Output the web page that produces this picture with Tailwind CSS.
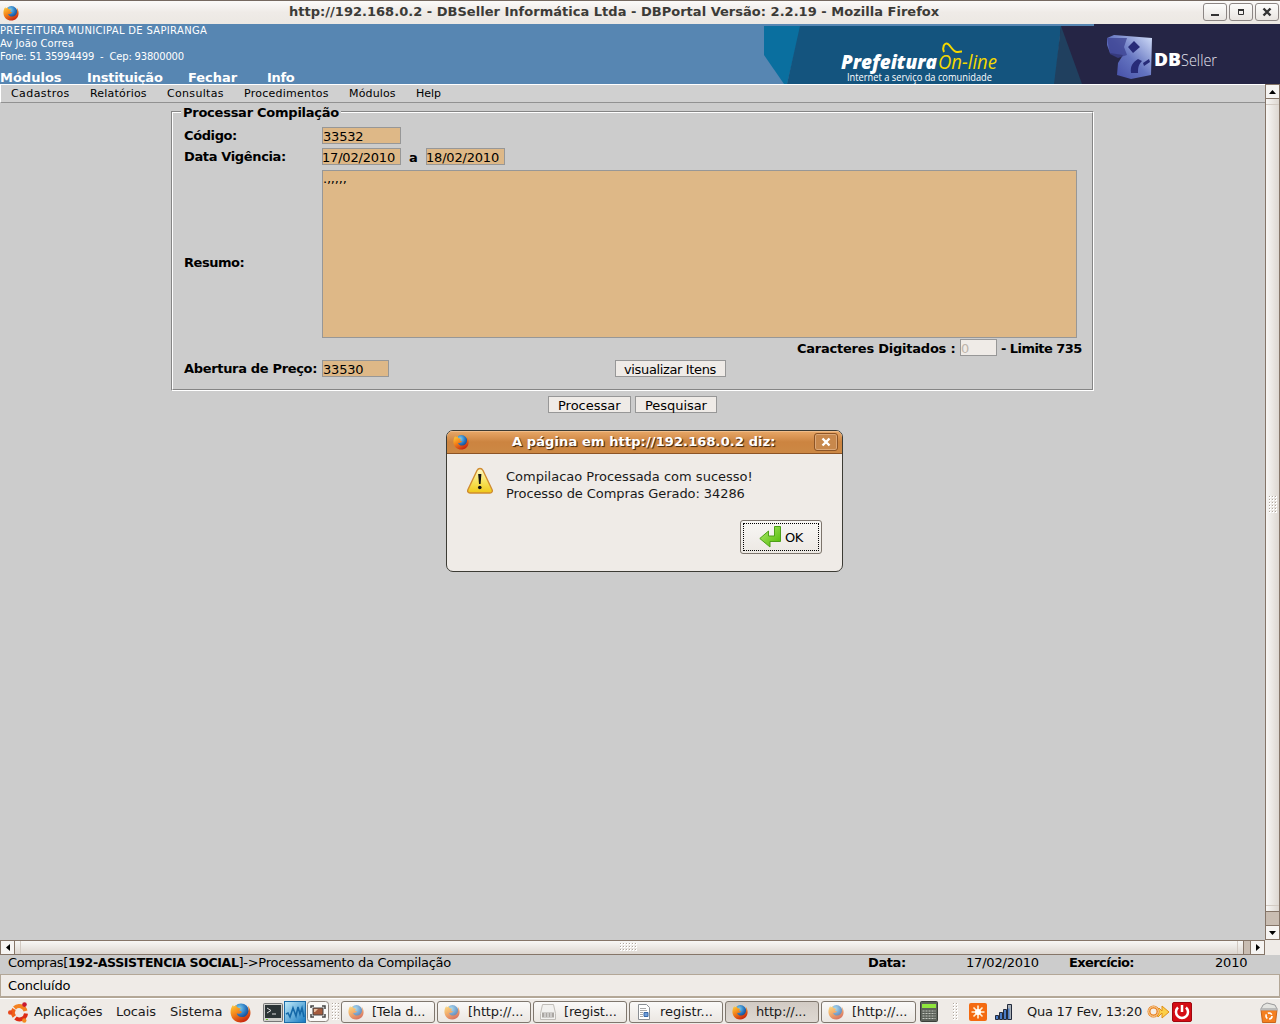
<!DOCTYPE html>
<html lang="pt-BR">
<head>
<meta charset="utf-8">
<title>DBPortal</title>
<script src="https://cdn.jsdelivr.net/npm/@tailwindcss/browser@4"></script>
</head>
<body class="w-[1280px] h-[1024px] overflow-hidden bg-[#ccc] text-black font-['DejaVu_Sans',sans-serif] text-[13px] leading-4 whitespace-nowrap">
<svg width="0" height="0" class="absolute">
  <defs>
    <radialGradient id="globe" cx=".4" cy=".3" r=".8"><stop offset="0" stop-color="#7fd0f0"/><stop offset=".5" stop-color="#2a78c0"/><stop offset="1" stop-color="#0b2a70"/></radialGradient>
    <linearGradient id="fox" x1="0" y1="0" x2=".6" y2="1"><stop offset="0" stop-color="#ffd23c"/><stop offset=".45" stop-color="#f58a1c"/><stop offset="1" stop-color="#c8280e"/></linearGradient>
    <linearGradient id="warn" x1="0" y1="0" x2="0" y2="1"><stop offset="0" stop-color="#fff9c8"/><stop offset=".55" stop-color="#f7e25a"/><stop offset="1" stop-color="#f0c818"/></linearGradient>
    <linearGradient id="green" x1="0" y1="0" x2="1" y2="1"><stop offset="0" stop-color="#b0ec70"/><stop offset="1" stop-color="#4fb800"/></linearGradient>
    <linearGradient id="cube" x1="0" y1="1" x2="1" y2="0"><stop offset="0" stop-color="#3c44a0"/><stop offset=".5" stop-color="#6474c0"/><stop offset="1" stop-color="#d4e0fa"/></linearGradient>
    <linearGradient id="sky" x1="0" y1="0" x2="1" y2="1"><stop offset="0" stop-color="#c4ecfa"/><stop offset="1" stop-color="#1478c0"/></linearGradient>
    <pattern id="grip" width="3" height="3" patternUnits="userSpaceOnUse"><path d="M0 0h2v2H0z" fill="#fff"/><path d="M0 0h1v1H0z" fill="#b0a79e"/></pattern>
    <symbol id="firefox" viewBox="0 0 20 20">
      <circle cx="10.5" cy="9" r="7.6" fill="url(#globe)"/>
      <path d="M3 2.5C1 5 .3 8 .6 11c.6 5 4.700 8.500 9.600 8.500 5.300 0 9.300-4.100 9.300-9.300 0-2.600-.8-5-2.500-6.700.7 1.800 1 3.400.6 5-.5 3.500-3 5.900-6.200 5.900-2.700 0-4.700-1.500-5-3.600 1 .6 2.300.6 3.300-.1.8-.6 1.400-.6 1.700-1.200-.7-.7-2-.8-2.600-1.300 0-.9 1.200-1.300 1.400-2.200-1.300 0-2.400-.2-3-.9C5.800 4.600 6 3.500 6.500 3 5.200 3 4.300 3.600 3.600 4.300 3.100 3.800 3 3.200 3 2.500z" fill="url(#fox)"/>
    </symbol>
  </defs>
</svg>
<div class="flex flex-col w-[1280px] h-[1024px]">

  <!-- Window title bar -->
  <div class="flex h-6 shrink-0 items-center border-t border-[#756960] bg-linear-to-b from-[#fbfaf9] via-[#efebe7] to-[#ece8e3]">
    <svg class="ml-[3px] size-4 shrink-0"><use href="#firefox"/></svg>
    <div class="ml-[270px] w-[914px] pb-px font-bold tracking-[0.02px] text-[#3c3b37]">http://192.168.0.2 - DBSeller Informática Ltda - DBPortal Versão: 2.2.19 - Mozilla Firefox</div>
    <div class="flex gap-[2px] pb-px">
      <div class="flex h-[18px] w-6 items-center justify-center rounded-[3px] border border-[#8c8684] bg-linear-to-b from-[#fdfdfc] to-[#e9e5e1]"><svg width="10" height="10"><path d="M1 8h8" stroke="#333" stroke-width="2"/></svg></div>
      <div class="flex h-[18px] w-6 items-center justify-center rounded-[3px] border border-[#8c8684] bg-linear-to-b from-[#fdfdfc] to-[#e9e5e1]"><svg width="10" height="10"><path d="M2.500 3v4.500h5v-5h-5" fill="none" stroke="#333"/><path d="M2 3h6" stroke="#333" stroke-width="2"/></svg></div>
      <div class="flex h-[18px] w-6 items-center justify-center rounded-[3px] border border-[#8c8684] bg-linear-to-b from-[#fdfdfc] to-[#e9e5e1]"><svg width="10" height="10"><path d="M1.500 1.500l7 7m0-7l-7 7" stroke="#333" stroke-width="2.400"/></svg></div>
    </div>
  </div>

  <!-- Municipality header -->
  <div class="flex h-[60px] shrink-0 bg-[#5786b2] text-white">
    <div class="w-[764px] text-[10px] leading-[13px]">
      <div class="tracking-[0.32px]">PREFEITURA MUNICIPAL DE SAPIRANGA</div>
      <div class="tracking-[0.07px]">Av João Correa</div>
      <div class="tracking-[-0.19px]">Fone: 51 35994499 &nbsp;- &nbsp;Cep: 93800000</div>
      <div class="mt-[8px] flex text-[13px] leading-[13px] font-bold">
        <div class="w-[87px]">Módulos</div><div class="w-[101px] tracking-[-0.2px]">Instituição</div><div class="w-[79px] tracking-[-0.05px]">Fechar</div><div class="tracking-[-0.3px]">Info</div>
      </div>
    </div>
    <svg width="516" height="60" class="shrink-0">
      <path d="M296 2h34V0h186v60H296z" fill="#252545"/>
      <path d="M0 2h37L23 60h-3L0 31z" fill="#0a6f9f"/>
      <path d="M36 2h261l-6 58H23z" fill="#14547e"/>
      <path d="M297 2l21 58h-28z" fill="#20405f"/>
      <g font-family="'Open Sans',sans-serif">
        <text x="77" y="45" font-size="20" font-weight="800" font-style="italic" fill="#fff" textLength="96" lengthAdjust="spacingAndGlyphs">Prefeitura</text>
        <text x="174" y="45" font-size="20.500" font-style="italic" fill="#f4d800" textLength="59" lengthAdjust="spacingAndGlyphs">On-line</text>
        <text x="83" y="56.500" font-size="10.500" fill="#fff" textLength="145" lengthAdjust="spacingAndGlyphs">Internet a serviço da comunidade</text>
        <text x="390" y="41.500" font-size="17" font-weight="800" fill="#fff" textLength="27" lengthAdjust="spacingAndGlyphs">DB</text>
        <text x="417" y="41.500" font-size="17" font-weight="300" fill="#e4e4ee" textLength="36" lengthAdjust="spacingAndGlyphs">Seller</text>
      </g>
      <path d="M180 28c-2-4 0-10 4-8 3 2 5 8 9 8 2 0 3-.5 5-.5" fill="none" stroke="#f4d800" stroke-width="2"/>
      <path d="M343 14l7-3 38 3-1 37-20 4-14-4 1-12 5-8-13-2-3-8z" fill="url(#cube)"/>
      <path d="M343 14l20 0-3 9 3 8-9 3-8-4z" fill="#3c4290" opacity=".75"/>
      <path d="M364 23l6-6 6 6-7 6zM367 49c-1-7 2-11 7-14l4 2c-4 4-4 8-4 12zM379 39l6-4 1 3-6 4z" fill="#272b78"/>
    </svg>
  </div>

  <!-- Page viewport and vertical scrollbar -->
  <div class="flex h-[856px] shrink-0">
    <div class="w-[1265px]">
      <div class="flex h-[19px] items-center border-t border-l border-white border-b border-b-[#919191] bg-[#d0d0d0] pl-[10px] text-[11px]">
        <div class="w-[79px] tracking-[0.42px]">Cadastros</div><div class="w-[77px] tracking-[0.2px]">Relatórios</div><div class="w-[77px] tracking-[0.32px]">Consultas</div><div class="w-[105px] tracking-[0.25px]">Procedimentos</div><div class="w-[67px] tracking-[0.15px]">Módulos</div><div>Help</div>
      </div>
      <div class="relative mt-2 ml-[171px] h-[280px] w-[923px] border border-t-[#858585] border-l-[#858585] border-r-white border-b-white">
        <div class="h-full border border-t-white border-l-white border-r-[#858585] border-b-[#858585] pl-[11px] pt-[14px]">
          <div class="absolute -top-[7px] left-[9px] w-[160px] bg-[#ccc] pl-[2px] font-bold tracking-[-0.25px]">Processar Compilação</div>
          <div class="flex h-[17px]">
            <div class="w-[138px] pt-px font-bold tracking-[-0.4px]">Código:</div>
            <div class="w-[79px] border border-[#979797] bg-[#deb887] pt-px tracking-[-0.2px]">33532</div>
          </div>
          <div class="mt-1 flex h-[17px]">
            <div class="w-[138px] pt-px font-bold tracking-[-0.36px]">Data Vigência:</div>
            <div class="w-[79px] border border-[#979797] bg-[#deb887] pt-px tracking-[-0.19px]"><span class="-ml-px">17/02/2010</span></div>
            <div class="w-[25px] pl-2 pt-[2px] font-bold">a</div>
            <div class="w-[79px] border border-[#979797] bg-[#deb887] pt-px tracking-[-0.19px]"><span class="-ml-px">18/02/2010</span></div>
          </div>
          <div class="mt-[5px] flex h-[168px]">
            <div class="flex w-[138px] items-center pt-[18px] font-bold tracking-[-0.45px]">Resumo:</div>
            <div class="w-[755px] border border-[#979797] bg-[#deb887] tracking-[-0.2px]">.,,,,,</div>
          </div>
          <div class="mt-px flex h-[17px] pl-[613px] font-bold">
            <div class="w-[163px] pt-[2px] tracking-[-0.23px]">Caracteres Digitados :</div>
            <div class="w-[37px] border border-[#979797] bg-[#efebe7] pt-px font-normal text-[#bdb5ac]">0</div>
            <div class="pt-[2px] pl-1 tracking-[-0.55px]">- Limite 735</div>
          </div>
          <div class="mt-1 flex h-[17px]">
            <div class="w-[138px] pt-px font-bold tracking-[-0.33px]">Abertura de Preço:</div>
            <div class="w-[67px] border border-[#979797] bg-[#deb887] pt-px tracking-[-0.2px]">33530</div>
            <div class="ml-[226px] w-[111px] border border-[#979797] bg-[#efebe7] pt-px pl-2 tracking-[-0.36px]">visualizar Itens</div>
          </div>
        </div>
      </div>
      <div class="mt-[5px] ml-[548px] flex h-[17px] gap-1">
        <div class="w-[83px] border border-[#979797] bg-[#efebe7] pt-px pl-[9px]">Processar</div>
        <div class="w-[82px] border border-[#979797] bg-[#efebe7] pt-px pl-[9px] tracking-[-0.05px]">Pesquisar</div>
      </div>
    </div>
    <div class="flex w-[15px] flex-col border-x border-[#857568] bg-[#c9bdb2]">
      <div class="flex h-[15px] items-center justify-center border-y border-[#857568] bg-[#f6f4f2]"><svg width="7" height="4"><path d="M3.500 0L7 4H0z"/></svg></div>
      <div class="flex h-[813px] flex-col justify-between border-b border-[#857568] bg-linear-to-r from-[#f8f7f5] to-[#ddd7d1] py-[5px]">
        <div class="h-px bg-[#d2cac2]"></div>
        <svg width="13" height="18"><path d="M2 0h9v18H2z" fill="url(#grip)"/></svg>
        <div class="h-px bg-[#d2cac2]"></div>
      </div>
      <div class="mt-auto flex h-[15px] items-center justify-center border-y border-[#857568] bg-[#f6f4f2]"><svg width="7" height="4"><path d="M0 0h7L3.500 4z"/></svg></div>
    </div>
  </div>

  <!-- Horizontal scrollbar -->
  <div class="flex h-[15px] shrink-0 bg-[#efebe7]">
    <div class="flex w-[1265px] border-y border-r border-[#857568] bg-[#c9bdb2]">
      <div class="flex w-[15px] items-center justify-center border-x border-[#857568] bg-[#f6f4f2]"><svg width="4" height="7"><path d="M4 0v7L0 3.500z"/></svg></div>
      <div class="flex w-[1229px] items-center justify-between border-r border-[#857568] bg-linear-to-b from-[#f8f7f5] to-[#ddd7d1] px-[5px]">
        <div class="h-full w-px bg-[#d2cac2]"></div>
        <svg width="18" height="9"><path d="M0 0h18v9H0z" fill="url(#grip)"/></svg>
        <div class="h-full w-px bg-[#d2cac2]"></div>
      </div>
      <div class="ml-auto flex w-[14px] items-center justify-center border-l border-[#857568] bg-[#f6f4f2]"><svg width="4" height="7"><path d="M0 0l4 3.500L0 7z"/></svg></div>
    </div>
  </div>

  <!-- Application status -->
  <div class="flex h-[19px] shrink-0 pl-2">
    <div class="w-[860px]"><span class="tracking-[-0.4px]">Compras[</span><b class="text-[12.5px] tracking-[-0.36px]">192-ASSISTENCIA SOCIAL</b><span class="tracking-[-0.27px]">]-&gt;Processamento da Compilação</span></div>
    <div class="w-[98px] font-bold tracking-[-0.4px]">Data:</div>
    <div class="w-[103px] tracking-[-0.2px]">17/02/2010</div>
    <div class="w-[146px] font-bold tracking-[-0.6px]">Exercício:</div>
    <div class="tracking-[-0.2px]">2010</div>
  </div>
  <div class="flex h-6 shrink-0 items-center border border-b-2 border-[#b3a797] bg-[#efebe7] pl-[7px] tracking-[-0.2px]">Concluído</div>

  <!-- Desktop panel -->
  <div class="flex h-[27px] shrink-0 items-center border-t border-white bg-[#efebe7] pl-2 text-[#1a1a1a]">
    <svg width="21" height="21" viewBox="0 0 21 21" class="shrink-0"><g fill="none" stroke-width="4"><path d="M6.500 6A6.500 6.500 0 0 1 17.500 9" stroke="#f48120"/><path d="M18 11.500A6.500 6.500 0 0 1 7.500 16" stroke="#dd2c14"/><path d="M6.300 14.500A6.500 6.500 0 0 1 6 7" stroke="#f06018"/></g><circle cx="2.200" cy="10.500" r="2.200" fill="#e8481c"/><circle cx="16.500" cy="2.600" r="2.300" fill="#c81830"/><circle cx="16.300" cy="18.500" r="2.200" fill="#f48a20"/></svg>
    <div class="ml-[5px] w-[82px] tracking-[-0.1px]">Aplicações</div>
    <div class="w-[54px] tracking-[-0.1px]">Locais</div>
    <div class="w-[60px]">Sistema</div>
    <svg class="size-[21px] shrink-0"><use href="#firefox"/></svg>
    <svg width="20" height="19" class="ml-3 shrink-0"><rect x=".5" y=".5" width="19" height="18" rx="1" fill="#d0d0cc" stroke="#777"/><path d="M2 2h16v13H2z" fill="#2c3436"/><path d="M4 5l4 2.500L4 10M9 11h4" fill="none" stroke="#ddd"/><path d="M3 16.500h2" stroke="#6c2"/></svg>
    <svg width="22" height="22" class="ml-px shrink-0"><rect x=".5" y=".5" width="21" height="21" fill="url(#sky)" stroke="#1c6ca8"/><path d="M2 13l2-1 2 4 3-9 3 8 2-9 2 7 2-6 2 9" fill="none" stroke="#1468a8" stroke-width="1.600"/></svg>
    <svg width="22" height="22" class="ml-px shrink-0"><rect x=".5" y=".5" width="21" height="20" rx="3" fill="#faf9f7" stroke="#8f8780"/><rect x="6" y="7" width="10" height="7" fill="#a45a3c" stroke="#444"/><path d="M7 8h4l-3 3H7z" fill="#e8c0a0"/><path d="M4 7V5h3M15 5h3v3M18 13v3h-3M7 16H4v-3" fill="none" stroke="#444" stroke-width="1.500"/></svg>
    <svg width="7" height="18" class="ml-[3px] shrink-0"><path d="M0 0h7v18H0z" fill="url(#grip)"/></svg>
    <div class="ml-[2px] flex gap-[2px]">
      <div class="flex h-[22px] w-[94px] items-center gap-2 rounded-[3px] border border-[#7f776e] bg-linear-to-b from-[#faf9f8] to-[#ebe7e2] pl-[6px] tracking-[-0.2px]"><svg class="size-4 opacity-60"><use href="#firefox"/></svg>[Tela d...</div>
      <div class="flex h-[22px] w-[94px] items-center gap-2 rounded-[3px] border border-[#7f776e] bg-linear-to-b from-[#faf9f8] to-[#ebe7e2] pl-[6px] tracking-[-0.2px]"><svg class="size-4 opacity-60"><use href="#firefox"/></svg>[http://...</div>
      <div class="flex h-[22px] w-[94px] items-center gap-2 rounded-[3px] border border-[#7f776e] bg-linear-to-b from-[#faf9f8] to-[#ebe7e2] pl-[6px] tracking-[-0.15px]"><svg width="16" height="16"><path d="M2.500.5h11l2 9v6H.5v-6z" fill="#f2f1ef" stroke="#c0bdb8"/><path d="M2 8.500h12v5H2z" fill="#aaa6a2"/><path d="M4 10h8M4 12h8" stroke="#eee" stroke-dasharray="2 1"/></svg>[regist...</div>
      <div class="flex h-[22px] w-[94px] items-center gap-2 rounded-[3px] border border-[#7f776e] bg-linear-to-b from-[#faf9f8] to-[#ebe7e2] pl-[6px] tracking-[-0.05px]"><svg width="16" height="16"><path d="M2.500.5h8l3 3v12h-11z" fill="#fff" stroke="#8a8f94"/><path d="M4 4.500h6M4 6.500h7M4 8.500h3M4 10.500h3M4 12.500h3" stroke="#aaa"/><path d="M8 8.500h4v4H8z" fill="#6c9cd8" stroke="#3868a8"/></svg>registr...</div>
      <div class="flex h-[22px] w-[94px] items-center gap-2 rounded-[3px] border border-[#7f776e] bg-linear-to-b from-[#d2cbc4] to-[#ded8d2] pl-[6px] tracking-[-0.2px]"><svg class="size-4"><use href="#firefox"/></svg>http://...</div>
      <div class="flex h-[22px] w-[95px] items-center gap-2 rounded-[3px] border border-[#7f776e] bg-linear-to-b from-[#faf9f8] to-[#ebe7e2] pl-[6px] tracking-[-0.2px]"><svg class="size-4 opacity-60"><use href="#firefox"/></svg>[http://...</div>
    </div>
    <svg width="20" height="22" class="ml-1 shrink-0"><rect x=".5" y=".5" width="17" height="20" rx="1" fill="#5c625a" stroke="#3c403a"/><path d="M2 3h14v4H2z" fill="#8fe63c"/><path d="M2.500 10h13M2.500 12.500h13M2.500 15h13M2.500 17.500h13" stroke="#c4c8c0" stroke-dasharray="2 1"/></svg>
    <svg width="6" height="18" class="ml-[13px] shrink-0"><path d="M0 0h6v18H0z" fill="url(#grip)"/></svg>
    <svg width="18" height="18" class="ml-[10px] shrink-0"><rect width="18" height="18" rx="2" fill="#f46a10"/><path d="M9 2.500v13M2.500 9h13M4.500 4.500l9 9M13.500 4.500l-9 9" stroke="#fff3d8" stroke-width="1.600"/><circle cx="9" cy="9" r="3" fill="#fff"/></svg>
    <svg width="18" height="16" class="ml-2 shrink-0"><g fill="#4a7cc8" stroke="#222a3c"><path d="M.5 11.500h3v4h-3zM4.500 8.500h3v7h-3zM8.500 5.500h3v10h-3z"/><path d="M12.500 .5h4v15h-4z" fill="#a8b0b8"/><path d="M13 4.500h1.500v10.500H13z" stroke="none"/></g></svg>
    <div class="ml-[14px] w-[120px] tracking-[-0.26px]">Qua 17 Fev, 13:20</div>
    <svg width="23" height="16" class="shrink-0"><path d="M9 8l3-4 3 3V2l7 6-7 6V9l-4 4z" fill="#fcd048" stroke="#e09018"/><circle cx="6.500" cy="7.500" r="4.500" fill="#f4efe8" stroke="#e88020" stroke-width="3"/><circle cx="6.500" cy="7.500" r="4.800" fill="none" stroke="#fce0b0"/></svg>
    <svg width="21" height="20" class="ml-[2px] shrink-0"><rect x=".5" y=".5" width="19" height="19" rx="1.500" fill="#d40c14" stroke="#a00810"/><path d="M6 5.500a6 6 0 1 0 8 0M10 3v7" fill="none" stroke="#fff" stroke-width="2.500"/></svg>
    <svg width="18" height="21" class="ml-[67px] shrink-0"><path d="M1 7l2-4 4-2 4 1 4 1 2 4z" fill="#e4e4e0" stroke="#999"/><path d="M1 8h16l-1.500 12.500h-13z" fill="#f48020" stroke="#c8641c"/><path d="M0 7.500h18" stroke="#bbb" stroke-width="2"/><circle cx="9" cy="14" r="3" fill="none" stroke="#fff" stroke-width="1.600" stroke-dasharray="4.500 1.800"/></svg>
  </div>
</div>

<!-- Alert dialog -->
<div class="absolute top-[430px] left-[446px] h-[142px] w-[397px] overflow-hidden rounded-[7px] border border-[#3c3b34] bg-[#efebe7]">
  <div class="flex h-[23px] items-center border-b border-[#8c5426] bg-linear-to-b from-[#e8a868] via-[#cc8440] to-[#cc8844] pl-[6px] shadow-[inset_0_1px_0_#f0bc88]">
    <svg class="size-4 shrink-0"><use href="#firefox"/></svg>
    <div class="ml-[43px] w-[302px] pb-px font-bold tracking-[0.11px] text-white [text-shadow:1px_1px_1px_#4c2c10,1px_1px_0_#7c5028]">A página em http://192.168.0.2 diz:</div>
    <div class="flex h-[18px] w-6 items-center justify-center rounded-[3px] border border-[#8c5426] bg-[#c8884c] shadow-[inset_0_0_0_1px_#dca878]"><svg width="10" height="10"><path d="M1.500 1.500l7 7m0-7l-7 7" stroke="#fff" stroke-width="2.400"/></svg></div>
  </div>
  <div class="flex pt-[14px] pl-5">
    <svg width="27" height="28" class="-mt-px shrink-0"><path d="M13 1.500c1.500 0 2.300.8 3 2l9 19c.9 2-.2 3.500-2 3.500H3c-2 0-2.900-1.600-2-3.500l9-19c.6-1.200 1.500-2 3-2z" fill="url(#warn)" stroke="#d08c30" stroke-width="1.400"/><path d="M11.200 7h3.200l-.8 10h-1.600z" fill="#111"/><circle cx="12.800" cy="20.500" r="1.800" fill="#111"/></svg>
    <div class="ml-3 leading-[17px] text-[#1a1a1a]"><div>Compilacao Processada com sucesso!</div><div class="tracking-[-0.08px]">Processo de Compras Gerado: 34286</div></div>
  </div>
  <div class="mt-[18px] ml-[293px] h-[34px] w-[82px] rounded-[3px] border border-[#7c746c] bg-linear-to-b from-[#f8f7f5] to-[#ece8e3] p-[2px]">
    <div class="flex h-full items-center border border-dotted border-black pl-[15px]"><svg width="22" height="22"><path d="M15.500 .5h6v15H11v5.500L.8 12.500l8.700-7.500v5h6z" fill="url(#green)" stroke="#4ea018"/></svg><span class="ml-1 pt-px tracking-[-0.4px]">OK</span></div>
  </div>
</div>
</body>
</html>
